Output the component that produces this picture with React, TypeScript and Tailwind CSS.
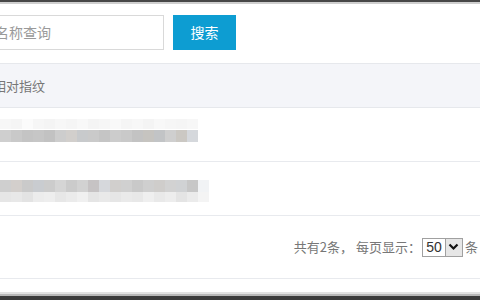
const rowOneTop = ['#f7f7f7', '#f5f5f5', '#fbfbfb', '#f6f6f6', '#f4f4f4', '#f7f7f7', '#f5f5f5', '#f8f8f8', '#f4f4f4', '#f6f6f6', '#f9f9f9', '#f5f5f5', '#f7f7f7', '#f4f4f4', '#f8f8f8', '#f6f6f6', '#f5f5f5', '#f7f7f7'];
const rowOneMain = ['#cfcfcf', '#c9c9c9', '#c4c4c4', '#c6c6c6', '#c2c2c2', '#cdcdcd', '#d2cfcc', '#c8cacc', '#cacaca', '#c5c5c5', '#cccccc', '#c9c9c9', '#c3c3c3', '#c6c4c0', '#c2c4c6', '#cfcfcf', '#cbc8c3', '#d5d8dc'];
const rowTwoMain = ['#cfcfcf', '#d3cfcc', '#cacaca', '#c9ccd0', '#cccccc', '#d5d5d5', '#cbcbcb', '#d2d2d2', '#c6c3c4', '#d6d8dc', '#d1cfcd', '#d0d0d0', '#c9c9c9', '#cfcfcf', '#cfcdcb', '#d2d2d2', '#d0d2d4', '#c7c7c7', '#f1f3f5'];
const rowTwoSub = ['#e6e6e6', '#e8e8e8', '#e3e3e3', '#ececec', '#eeeeee', '#e7e7e7', '#ebebeb', '#f0f0f0', '#e5e5e5', '#e9e9e9', '#e6e6e6', '#eaeaea', '#e8e8e8', '#efefef', '#e9e9e9', '#ededed', '#e4e4e4', '#ebebeb', '#f4f4f4'];

const cjk = { fontFamily: '"Noto Sans CJK SC", "Liberation Sans", sans-serif' };

function BlurBand({ colors, height }: { colors: string[]; height: string }) {
  return (
    <div className={`flex ${height}`}>
      {colors.map((c, i) => (
        <div key={i} className="w-[11px] shrink-0" style={{ backgroundColor: c }} />
      ))}
    </div>
  );
}

export default function App() {
  return (
    <div className="flex h-[300px] w-[480px] flex-col overflow-hidden bg-white" style={cjk}>
      <div className="h-[2px] shrink-0 bg-[#474747]" />
      <div className="h-[2px] shrink-0 bg-[#cfcfcf]" />

      <div className="flex shrink-0 items-center gap-[9px] pt-[11px]">
        <div className="-ml-[22px] flex h-[35px] w-[186px] items-center border border-[#d9d9d9] bg-white pl-[16px] text-[14px] text-[#9a9a9a]">
          名称查询
        </div>
        <button className="flex h-[35px] w-[63px] items-center justify-center bg-[#0d9dd2] text-[14px] text-white">
          搜索
        </button>
      </div>

      <div className="mt-[13px] flex h-[45px] shrink-0 items-center border-y border-[#e6e8ec] bg-[#f4f5f9] text-[13px] text-[#777]">
        <span className="-ml-[7px]">相对指纹</span>
      </div>

      <div className="flex h-[54px] shrink-0 flex-col border-b border-[#e8eaee] pt-[11px]">
        <BlurBand colors={rowOneTop} height="h-[10px]" />
        <div className="h-[1px]" />
        <BlurBand colors={rowOneMain} height="h-[12px]" />
      </div>

      <div className="flex h-[54px] shrink-0 flex-col border-b border-[#e8eaee] pt-[18px]">
        <BlurBand colors={rowTwoMain} height="h-[12px]" />
        <BlurBand colors={rowTwoSub} height="h-[10px]" />
      </div>

      <div className="flex h-[63px] shrink-0 items-center justify-end border-b border-[#e8eaee] pr-[2px] text-[13px] text-[#777]">
        <span>共有2条， 每页显示：</span>
        <div className="ml-[1px] flex h-[19px] items-stretch border border-[#a0a0a0] bg-white">
          <span className="flex w-[22px] items-center justify-center text-[14px] text-[#333]" style={{ fontFamily: '"Liberation Sans", sans-serif' }}>
            50
          </span>
          <span className="flex w-[17px] items-center justify-center border-l border-[#a0a0a0] bg-[#e6e6e6]">
            <svg width="11" height="8" viewBox="0 0 11 8">
              <path d="M1.5 1.5 L5.5 5.5 L9.5 1.5" fill="none" stroke="#111" strokeWidth="2.2" />
            </svg>
          </span>
        </div>
        <span className="ml-[2px]">条</span>
      </div>

      <div className="flex-1" />
      <div className="h-[2px] shrink-0 bg-[#e2e2e2]" />
      <div className="h-[2px] shrink-0 bg-[#b8b8b8]" />
      <div className="h-[4px] shrink-0 bg-[#3c3c3c]" />
    </div>
  );
}
